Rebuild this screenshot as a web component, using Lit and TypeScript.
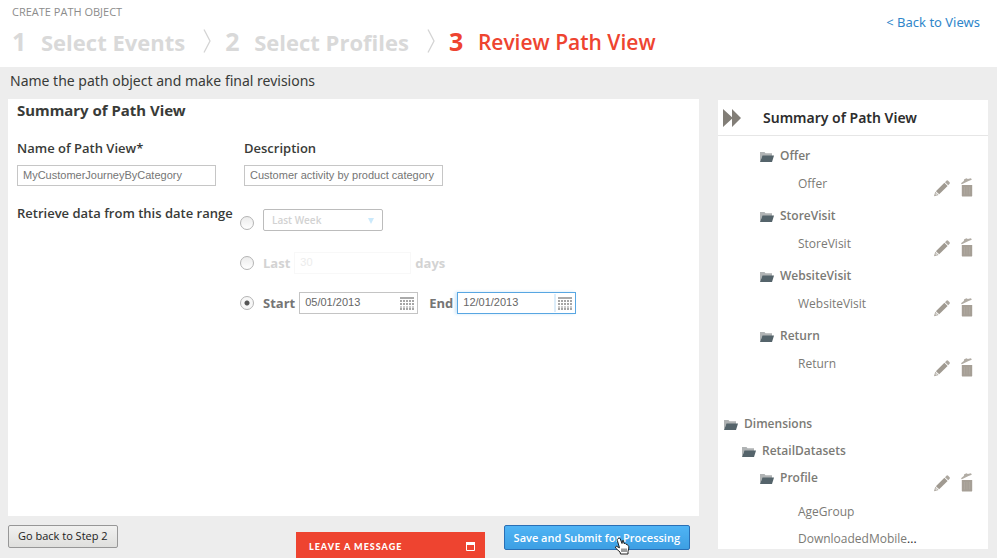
import { LitElement, html, svg, css, nothing } from "lit";
import { customElement, property } from "lit/decorators.js";

const folderIcon = html`<svg class="folder" viewBox="0 0 14 10" aria-hidden="true">
  <path d="M0 10V0h4.500l1 1.300H12V5H2z" fill="#b0b3b4" />
  <path d="M2.500 3.500H14L12 10H0z" fill="#55646b" />
</svg>`;

const pencilIcon = html`<svg width="16" height="17" viewBox="0 0 16 17" aria-hidden="true">
  <path d="M0 16.3 1.3 11.8 4.6 15z" fill="#a8a299" />
  <path d="M1.2 14.2 1.8 12.6 3.7 14.5 2.2 15.2z" fill="#fff" opacity=".6" />
  <path d="M1.9 11.2 10.4 2.8 13.6 6 5.2 14.3z" fill="#a09a91" />
  <path d="M11 2.2 12.7.6Q13.4 0 14.1.7L15.6 2.2Q16.2 3 15.6 3.7L14.2 5.3z" fill="#aca79f" />
</svg>`;

const trashIcon = html`<svg width="12" height="19" viewBox="0 0 12 19" aria-hidden="true">
  <path d="M0 5.300 2.800 3 3.200 1.300 5.600.2 6.800 1 10 .2 10.800 1.800 7.500 3 .8 6.200z" fill="#b1aca4" />
  <path d="M.8 7h10.400v10.400q0 1.200-1.200 1.200H2q-1.200 0-1.200-1.200z" fill="#a69f96" />
  <path d="M3.500 9v7.500M6 9v7.500M8.600 9v7.500" stroke="#aea89f" stroke-width=".8" />
</svg>`;

const chevron = html`<svg class="chevron" width="8" height="24" viewBox="0 0 8 24" aria-hidden="true">
  <path d="M1 .5 7 12 1 23.5" fill="none" stroke="#d4d4d4" stroke-width="1.3" />
</svg>`;

const calendarIcon = html`<svg width="14" height="13" viewBox="0 0 14 13" aria-hidden="true">
  <rect width="14" height="2" fill="#aaa" />
  ${[3, 6, 9, 11].map((y) =>
    [0, 3, 6, 9, 12].map((x) => svg`<rect x=${x} y=${y} width="2" height="2" fill=${y === 9 ? "#ccc" : "#a6a6a6"} />`)
  )}
</svg>`;

interface TreeNode {
  label: string;
  level: number;
  editable?: boolean;
}

const metrics = ["Offer", "StoreVisit", "WebsiteVisit", "Return"];

const dimensions: TreeNode[] = [
  { label: "Dimensions", level: 0 },
  { label: "RetailDatasets", level: 1 },
  { label: "Profile", level: 2, editable: true },
];

@customElement("step-trail")
export class StepTrail extends LitElement {
  static styles = css`
    ol {
      list-style: none;
      margin: 0;
      padding: 0;
      display: flex;
      align-items: center;
      font-weight: 700;
      color: #d9d9d9;
      white-space: nowrap;
    }
    li {
      display: flex;
      align-items: center;
    }
    .number {
      width: 29px;
      font-size: 25px;
      line-height: 28px;
    }
    .label {
      font-size: 22px;
      line-height: 28px;
      padding-top: 3px;
    }
    .chevron {
      margin: 0 14px 0 18px;
    }
    .current {
      color: #ee4430;
    }
    .current .label {
      font-size: 21px;
      font-weight: 600;
    }
  `;
  render() {
    const steps = ["Select Events", "Select Profiles", "Review Path View"];
    return html`<ol>
      ${steps.map((label, i) => {
        const last = i === steps.length - 1;
        return html`<li class=${last ? "current" : ""} aria-current=${last ? "step" : nothing}>
          <span class="number">${i + 1}</span><span class="label">${label}</span>${last ? nothing : chevron}
        </li>`;
      })}
    </ol>`;
  }
}

@customElement("date-field")
export class DateField extends LitElement {
  @property() label = "";
  @property() value = "";
  @property({ type: Boolean, reflect: true }) active = false;

  static styles = css`
    :host {
      display: flex;
      align-items: center;
      gap: 4px;
    }
    label {
      font-weight: 700;
      font-size: 13px;
      color: #757575;
    }
    .box {
      box-sizing: border-box;
      display: flex;
      align-items: center;
      width: 119px;
      height: 22px;
      border: 1px solid #c4c4c4;
      background: #fff;
    }
    input {
      flex: 1;
      min-width: 0;
      height: 18px;
      border: 0;
      outline: 0;
      padding: 0 5px 2px;
      background: none;
      font: 11px "Liberation Sans", sans-serif;
      color: #666;
      box-sizing: border-box;
    }
    button {
      display: flex;
      border: 0;
      padding: 0 3px 0 2px;
      background: none;
    }
    :host([active]) .box {
      border-color: #58a6e2;
      box-shadow: -2px 0 3px #cfe6f8;
    }
    :host([active]) input {
      border-right: 2px solid #dcedfa;
    }
  `;
  render() {
    return html`<label for="date">${this.label}</label>
      <span class="box">
        <input id="date" type="text" .value=${this.value} />
        <button type="button" aria-label="Open calendar">${calendarIcon}</button>
      </span>`;
  }
}

@customElement("path-summary")
export class PathSummary extends LitElement {
  static styles = css`
    :host {
      display: block;
      background: #fff;
      color: #7b7a75;
      font-size: 12px;
    }
    header {
      display: flex;
      align-items: center;
      gap: 22px;
      height: 35px;
      padding-left: 5px;
      border-bottom: 1px solid #e6e6e6;
    }
    h2 {
      margin: 0;
      font-family: "Noto Sans", sans-serif;
      font-size: 14px;
      font-weight: 600;
      color: #2d2d2d;
    }
    .collapse,
    .actions button {
      display: flex;
      padding: 0;
      border: 0;
      background: none;
    }
    ul {
      list-style: none;
      margin: 0;
      padding: 0;
    }
    .metrics {
      padding: 6px 0 28px;
    }
    .node {
      display: flex;
      align-items: center;
      gap: 6px;
      height: 27px;
      font-weight: 600;
    }
    .folder {
      width: 14px;
      height: 10px;
      margin-top: 3px;
    }
    .level0 {
      padding-left: 6px;
    }
    .level1 {
      padding-left: 24px;
    }
    .level2 {
      padding-left: 42px;
    }
    .leaf {
      display: flex;
      height: 33px;
      padding-left: 80px;
      line-height: 30px;
    }
    .leaves {
      display: grid;
      gap: 7px;
      padding: 11px 0 0 80px;
      line-height: 20px;
    }
    .dots {
      color: #222;
    }
    .actions {
      display: flex;
      align-items: flex-end;
      gap: 11px;
      height: 28px;
      margin: 0 15px 0 auto;
    }
  `;

  private actions(name: string) {
    return html`<span class="actions">
      <button type="button" aria-label="Edit ${name}">${pencilIcon}</button>
      <button type="button" aria-label="Delete ${name}">${trashIcon}</button>
    </span>`;
  }

  render() {
    return html`
      <header>
        <button class="collapse" type="button" aria-label="Collapse panel">
          <svg width="18" height="18" viewBox="0 0 18 18" aria-hidden="true">
            <path d="M0 0 9 8.200V0L18 9 9 18V9.800L0 18z" fill="#827e77" />
          </svg>
        </button>
        <h2>Summary of Path View</h2>
      </header>
      <ul class="metrics">
        ${metrics.map(
          (name) => html`<li>
            <div class="node level2">${folderIcon}<span>${name}</span></div>
            <div class="leaf"><span>${name}</span>${this.actions(name)}</div>
          </li>`
        )}
      </ul>
      <ul>
        ${dimensions.map(
          (n) => html`<li class="node level${n.level}">
            ${folderIcon}<span>${n.label}</span>${n.editable ? this.actions(n.label) : nothing}
          </li>`
        )}
      </ul>
      <ul class="leaves">
        <li>AgeGroup</li>
        <li>DownloadedMobile<span class="dots">...</span></li>
      </ul>
    `;
  }
}

@customElement("app-root")
export class AppRoot extends LitElement {
  static styles = css`
    :host {
      display: flex;
      flex-direction: column;
      min-height: 100vh;
      background: #ededed;
      font-family: "Open Sans", "Noto Sans", sans-serif;
      color: #393b38;
    }
    .top {
      display: flex;
      justify-content: space-between;
      box-sizing: border-box;
      height: 67px;
      padding: 4px 17px 0 12px;
      background: #fff;
    }
    .crumb {
      margin: 0;
      font-size: 11px;
      line-height: 16px;
      color: #8c8c8c;
    }
    step-trail {
      display: block;
      margin-top: 5px;
    }
    .back {
      font-family: "Noto Sans", sans-serif;
      font-size: 13px;
      line-height: 18px;
      padding-top: 9px;
      color: #2f86ca;
      text-decoration: none;
    }
    .intro {
      margin: 0;
      padding: 0 10px;
      font-family: "Noto Sans", sans-serif;
      font-size: 14px;
      line-height: 28px;
      height: 32px;
      box-sizing: border-box;
    }
    .columns {
      flex: 1;
      display: grid;
      grid-template-columns: minmax(0, 1fr) 270px;
      gap: 19px;
      padding: 0 9px 0 8px;
    }
    .work {
      display: flex;
      flex-direction: column;
    }
    .panel {
      flex: 1;
      padding: 0 9px;
      background: #fff;
    }
    path-summary {
      margin: 1px 0 9px;
    }
    h1 {
      margin: 0;
      font-family: "Noto Sans", sans-serif;
      font-size: 15px;
      font-weight: 700;
      line-height: 22px;
    }
    .fields {
      display: flex;
      gap: 28px;
      margin-top: 18px;
    }
    .field {
      display: grid;
      gap: 8px;
      font-size: 13px;
      font-weight: 600;
      line-height: 18px;
    }
    .field input {
      box-sizing: border-box;
      width: 199px;
      height: 21px;
      padding: 0 5px 2px;
      border: 1px solid #c6c6c6;
      font: 11px "Liberation Sans", sans-serif;
      color: #757575;
    }
    .range {
      display: grid;
      grid-template-columns: 223px 1fr;
      margin: 23px 0 0;
    }
    .rangename {
      margin-top: -5px;
      font-size: 13px;
      font-weight: 600;
      line-height: 18px;
    }
    .options {
      display: grid;
      gap: 12px;
    }
    .option {
      display: flex;
      align-items: center;
      height: 28px;
      font-size: 13px;
      font-weight: 700;
      color: #757575;
    }
    .option > input[type="radio"] {
      appearance: none;
      box-sizing: border-box;
      width: 14px;
      height: 14px;
      margin: 0 9px 0 0;
      border: 1px solid #b4b4b4;
      border-radius: 50%;
      background: linear-gradient(#ececec, #fff);
    }
    .option > input[type="radio"]:checked {
      background: radial-gradient(circle, #555 0 2px, #f7f7f7 3px);
    }
    .picker {
      display: grid;
      align-self: flex-start;
      align-items: center;
    }
    .picker > * {
      grid-area: 1 / 1;
    }
    .picker select {
      appearance: none;
      width: 120px;
      height: 22px;
      padding: 0 8px;
      border: 1px solid #bcbcbc;
      border-radius: 2px;
      background: #fff;
      font: 600 10px "Open Sans", sans-serif;
      color: #d2d2d2;
      opacity: 1;
    }
    .picker svg {
      justify-self: end;
      margin: 2px 9px 0 0;
    }
    .faded {
      color: #d3d3d3;
      gap: 4px;
    }
    .faded > input[type="radio"] {
      margin-right: 5px;
    }
    .faded > input[type="text"] {
      box-sizing: border-box;
      width: 117px;
      height: 22px;
      padding: 0 5px 2px;
      border: 1px solid #f8f8f8;
      background: #fff;
      font: 11px "Liberation Sans", sans-serif;
      color: #ececec;
    }
    .dates {
      display: flex;
      gap: 11px;
    }
    .footer {
      display: flex;
      justify-content: space-between;
      align-items: flex-start;
      height: 42px;
      box-sizing: border-box;
      padding: 9px 9px 0 0;
    }
    .secondary,
    .primary {
      box-sizing: border-box;
      padding: 0 9px;
      border-radius: 2px;
      font-family: inherit;
      font-size: 11px;
      white-space: nowrap;
    }
    .secondary {
      height: 23px;
      padding-bottom: 2px;
      border: 1px solid #979797;
      background: linear-gradient(#f1f1f0, #dfdfdd);
      color: #222;
    }
    .primary {
      position: relative;
      height: 25px;
      border: 1px solid #2a6fb5;
      background: linear-gradient(#4fb4f5, #3d9fe3);
      color: #fff;
      font-weight: 600;
    }
    .pointer {
      position: absolute;
      right: 58px;
      top: 11px;
    }
    .chat {
      position: fixed;
      left: 296px;
      bottom: 0;
      display: flex;
      justify-content: space-between;
      align-items: center;
      width: 189px;
      height: 26px;
      padding: 2px 10px 0 13px;
      box-sizing: border-box;
      border: 0;
      background: #ee4430;
      color: #fff;
      font: 900 9px "Lato", sans-serif;
      letter-spacing: 1px;
    }
  `;

  render() {
    return html`
      <header class="top">
        <div>
          <p class="crumb">CREATE PATH OBJECT</p>
          <step-trail></step-trail>
        </div>
        <a class="back" href="#views">&lt; Back to Views</a>
      </header>
      <p class="intro">Name the path object and make final revisions</p>
      <main class="columns">
        <form class="work">
          <section class="panel">
            <h1>Summary of Path View</h1>
            <div class="fields">
              <label class="field">Name of Path View*
                <input type="text" value="MyCustomerJourneyByCategory" />
              </label>
              <label class="field">Description
                <input type="text" value="Customer activity by product category" />
              </label>
            </div>
            <div class="range" role="radiogroup" aria-labelledby="range-name">
              <span class="rangename" id="range-name">Retrieve data from this date range</span>
              <div class="options">
                <div class="option">
                  <input type="radio" name="range" aria-label="Preset range" />
                  <span class="picker">
                    <select disabled aria-label="Preset range">
                      <option>Last Week</option>
                    </select>
                    <svg width="6" height="6" viewBox="0 0 6 6" aria-hidden="true">
                      <path d="M0 0h6L3 6z" fill="#cbe9fb" />
                    </svg>
                  </span>
                </div>
                <div class="option faded">
                  <input type="radio" name="range" id="last" />
                  <label for="last">Last</label>
                  <input type="text" value="30" disabled aria-label="Number of days" />
                  <span>days</span>
                </div>
                <div class="option">
                  <input type="radio" name="range" checked aria-label="Start and end dates" />
                  <span class="dates">
                    <date-field label="Start" value="05/01/2013"></date-field>
                    <date-field label="End" value="12/01/2013" active></date-field>
                  </span>
                </div>
              </div>
            </div>
          </section>
          <footer class="footer">
            <button class="secondary" type="button">Go back to Step 2</button>
            <button class="primary" type="button">
              Save and Submit for Processing
              <svg class="pointer" width="17" height="18" viewBox="0 0 17 18" aria-hidden="true">
                <path
                  d="M4 1.500Q5.500.2 6.300 2L8 6.500Q9-.1 10 6.500 11.300 5.800 12 7.300 13.500 6.900 14 8.500 15 9 14.800 11L14 14.500V17H6.500L6 15 2 11.500Q.6 9.600 2.200 9.200L5.500 10.800 3.300 3.400Q3 2 4 1.500z"
                  fill="#fff" stroke="#222" stroke-width="1" stroke-linejoin="round" />
                <path d="M8 11.500v3.500M10 11.500v3.500M12 11.500v3.500" stroke="#222" stroke-width=".9" />
              </svg>
            </button>
          </footer>
        </form>
        <path-summary></path-summary>
      </main>
      <button class="chat" type="button">
        LEAVE A MESSAGE
        <svg width="9" height="9" viewBox="0 0 9 9" aria-hidden="true">
          <path d="M.5 1v7.500h8V1z" fill="none" stroke="#fff" />
          <path d="M0 0h9v3H0z" fill="#fff" />
        </svg>
      </button>
    `;
  }
}
